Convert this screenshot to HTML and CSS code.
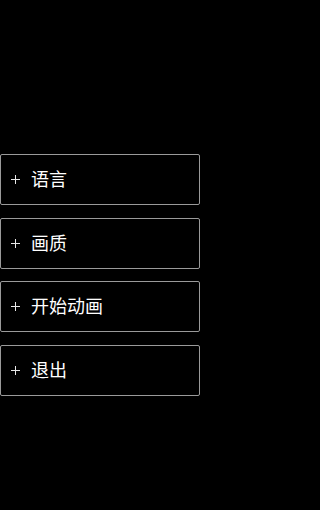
FILE: index.html
```
<!DOCTYPE html>
<html lang="zh-CN">
<head>
<meta charset="utf-8">
<link rel="stylesheet" href="styles.css">
</head>
<body>
<div class="menu">
  <div class="item"><span class="plus"></span><span class="label">语言</span></div>
  <div class="item"><span class="plus"></span><span class="label">画质</span></div>
  <div class="item"><span class="plus"></span><span class="label">开始动画</span></div>
  <div class="item"><span class="plus"></span><span class="label">退出</span></div>
</div>
</body>
</html>
```
FILE: styles.css
```
html, body {
  margin: 0;
  padding: 0;
  background: #000;
  height: 100%;
}
body {
  font-family: "Noto Sans CJK SC", "Noto Sans", sans-serif;
  color: #fff;
}
.menu {
  padding-top: 154px;
  display: flex;
  flex-direction: column;
  gap: 12.7px;
  width: 200px;
}
.item {
  box-sizing: border-box;
  height: 51px;
  border: 1px solid #9a9a9a;
  border-radius: 2px;
  display: flex;
  align-items: center;
  padding-left: 10px;
  padding-bottom: 3px;
}
.plus {
  position: relative;
  width: 9px;
  height: 9px;
  margin-right: 11px;
  margin-top: 3px;
  flex: none;
}
.plus::before, .plus::after {
  content: "";
  position: absolute;
  background: #e8e8e8;
}
.plus::before {
  left: 0;
  right: 0;
  top: 4px;
  height: 1px;
}
.plus::after {
  top: 0;
  bottom: 0;
  left: 4px;
  width: 1px;
}
.label {
  font-size: 18px;
  line-height: 1;
}
```
